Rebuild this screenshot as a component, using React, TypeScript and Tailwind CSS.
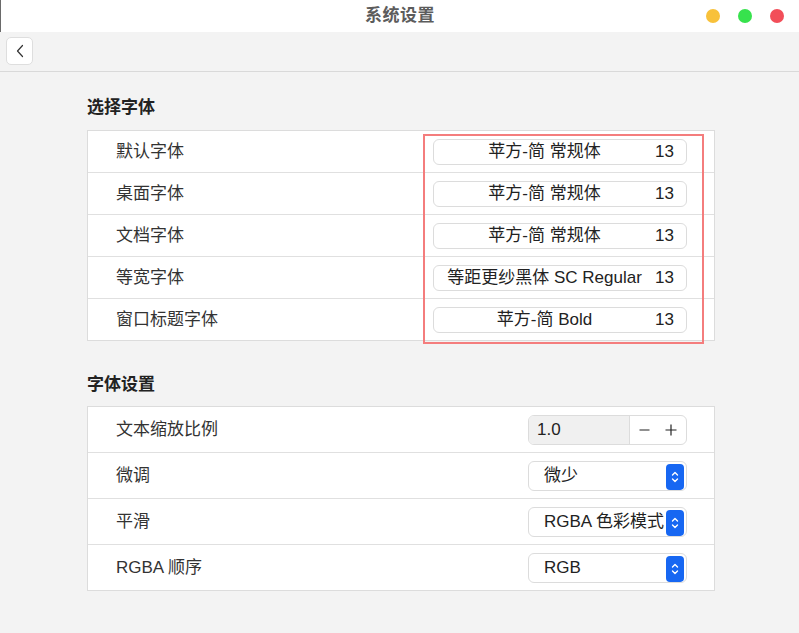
import React from "react";

const fontRows = [
  { label: "默认字体", name: "苹方-简 常规体" },
  { label: "桌面字体", name: "苹方-简 常规体" },
  { label: "文档字体", name: "苹方-简 常规体" },
  { label: "等宽字体", name: "等距更纱黑体 SC Regular" },
  { label: "窗口标题字体", name: "苹方-简 Bold" },
];

function SelectBox({ value }: { value: string }) {
  return (
    <div className="relative w-[159px] h-[30px] rounded-[6px] border border-[#dcdcdc] bg-white overflow-hidden">
      <div className="h-full flex items-center pl-[15px] whitespace-nowrap text-[#222]">{value}</div>
      <div className="absolute right-[2px] top-[2px] w-[18px] h-[26px] rounded-[4px] bg-[#1767f2] flex items-center justify-center">
        <svg width="10" height="16" viewBox="0 0 10 16" fill="none">
          <path d="M2.5 6 L5 3.5 L7.5 6" stroke="white" strokeWidth="1.4" strokeLinecap="round" strokeLinejoin="round" />
          <path d="M2.5 10 L5 12.5 L7.5 10" stroke="white" strokeWidth="1.4" strokeLinecap="round" strokeLinejoin="round" />
        </svg>
      </div>
    </div>
  );
}

export default function App() {
  return (
    <div
      className="w-[799px] h-[633px] bg-[#f3f3f3] overflow-hidden text-[17px] text-[#333]"
      style={{ fontFamily: '"Liberation Sans", "Noto Sans CJK SC", sans-serif' }}
    >
      {/* title bar */}
      <div className="h-[32px] bg-white grid grid-cols-[1fr_auto_1fr] items-center border-l border-[#6a6a6a]">
        <div />
        <div className="font-bold text-[17px] text-[#5c5c5c] tracking-[0.5px]">系统设置</div>
        <div className="flex justify-end items-center gap-[18px] pr-[15px]">
          <span className="w-[14px] h-[14px] rounded-full bg-[#f8c13a]" />
          <span className="w-[14px] h-[14px] rounded-full bg-[#37e24d]" />
          <span className="w-[14px] h-[14px] rounded-full bg-[#f24e59]" />
        </div>
      </div>

      {/* toolbar */}
      <div className="h-[40px] border-b border-[#d9d9d9] pl-[6px] pt-[5px]">
        <button className="w-[27px] h-[28px] rounded-[5px] bg-white border border-[#dedede] flex items-center justify-center">
          <svg width="10" height="14" viewBox="0 0 10 14" fill="none">
            <path d="M7.5 1.5 L2.5 7 L7.5 12.5" stroke="#333" strokeWidth="1.2" strokeLinecap="round" strokeLinejoin="round" />
          </svg>
        </button>
      </div>

      <div className="pl-[87px] w-[715px]">
        <div className="mt-[24px] h-[24px] leading-[24px] font-bold text-[17px] text-[#222]">选择字体</div>
        <div className="relative mt-[10px] bg-white border border-[#dcdcdc]">
          {fontRows.map((r, i) => (
            <div
              key={r.label}
              className={`flex items-center justify-between pl-[28px] pr-[27px] ${
                i < fontRows.length - 1 ? "h-[42px] border-b border-[#e0e0e0]" : "h-[41px]"
              }`}
            >
              <span>{r.label}</span>
              <div className="w-[254px] h-[26px] rounded-[6px] border border-[#dcdcdc] flex items-center px-[12px] text-[#222] whitespace-nowrap">
                <span className="flex-1 text-center">{r.name}</span>
                <span className="ml-[12px]">13</span>
              </div>
            </div>
          ))}
          <div className="absolute left-[335px] top-[3px] w-[281px] h-[210px] border-2 border-[#f47d7d] pointer-events-none" />
        </div>

        <div className="mt-[32px] h-[24px] leading-[24px] font-bold text-[17px] text-[#222]">字体设置</div>
        <div className="mt-[9px] bg-white border border-[#dcdcdc]">
          <div className="h-[46px] border-b border-[#e0e0e0] flex items-center justify-between pl-[28px] pr-[27px]">
            <span>文本缩放比例</span>
            <div className="w-[159px] h-[30px] rounded-[6px] border border-[#dcdcdc] flex overflow-hidden text-[#222]">
              <div className="w-[101px] bg-[#f0f0f0] border-r border-[#dcdcdc] flex items-center pl-[8px]">1.0</div>
              <div className="flex-1 flex items-center gap-[15px] pl-[9px]">
                <svg width="11" height="12" viewBox="0 0 11 12">
                  <path d="M0.5 6 H10.5" stroke="#222" strokeWidth="1.2" />
                </svg>
                <svg width="12" height="12" viewBox="0 0 12 12">
                  <path d="M0.5 6 H11.5 M6 0.5 V11.5" stroke="#222" strokeWidth="1.2" />
                </svg>
              </div>
            </div>
          </div>
          <div className="h-[46px] border-b border-[#e0e0e0] flex items-center justify-between pl-[28px] pr-[27px]">
            <span>微调</span>
            <SelectBox value="微少" />
          </div>
          <div className="h-[46px] border-b border-[#e0e0e0] flex items-center justify-between pl-[28px] pr-[27px]">
            <span>平滑</span>
            <SelectBox value="RGBA 色彩模式" />
          </div>
          <div className="h-[45px] flex items-center justify-between pl-[28px] pr-[27px]">
            <span>RGBA 顺序</span>
            <SelectBox value="RGB" />
          </div>
        </div>
      </div>
    </div>
  );
}
